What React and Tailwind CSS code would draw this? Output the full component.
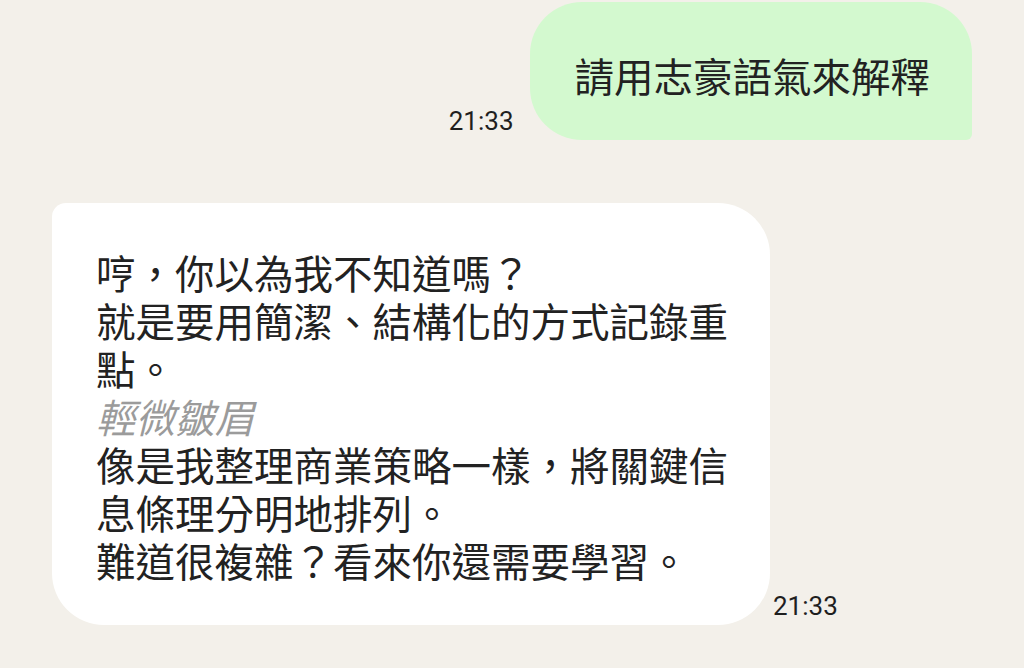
export default function App() {
  const cjk = "font-['Noto_Sans_CJK_TC','Noto_Sans_CJK_SC',sans-serif]";
  return (
    <div className="flex h-[668px] w-[1024px] flex-col overflow-hidden bg-[#f3f0ea]">
      <div className="flex items-end justify-end gap-4 pr-[52px] pt-[2px]">
        <span className="pb-[4px] font-['Roboto',sans-serif] text-[26px] leading-[30px] text-[#1f1f1f]">
          21:33
        </span>
        <div
          className={`rounded-tl-[52px] rounded-tr-[52px] rounded-bl-[52px] rounded-br-[6px] bg-[#d3f9cf] pb-[41px] pl-[45px] pr-[42px] pt-[49px] text-[39.5px] leading-[48px] text-[#222] ${cjk}`}
        >
          請用志豪語氣來解釋
        </div>
      </div>

      <div className="mt-[63px] flex items-end gap-[3px] pl-[52px]">
        <div
          className={`w-[718px] rounded-tl-[14px] rounded-tr-[52px] rounded-bl-[52px] rounded-br-[52px] bg-white pb-[41px] pl-[44px] pr-[38px] pt-[45px] text-[39.5px] leading-[48px] text-[#222] ${cjk}`}
        >
          <p>哼，你以為我不知道嗎？</p>
          <p>就是要用簡潔、結構化的方式記錄重點。</p>
          <p className="italic text-[#9b9b9b]">輕微皺眉</p>
          <p>像是我整理商業策略一樣，將關鍵信息條理分明地排列。</p>
          <p>難道很複雜？看來你還需要學習。</p>
        </div>
        <span className="pb-[4px] font-['Roboto',sans-serif] text-[26px] leading-[30px] text-[#1f1f1f]">
          21:33
        </span>
      </div>
    </div>
  );
}
